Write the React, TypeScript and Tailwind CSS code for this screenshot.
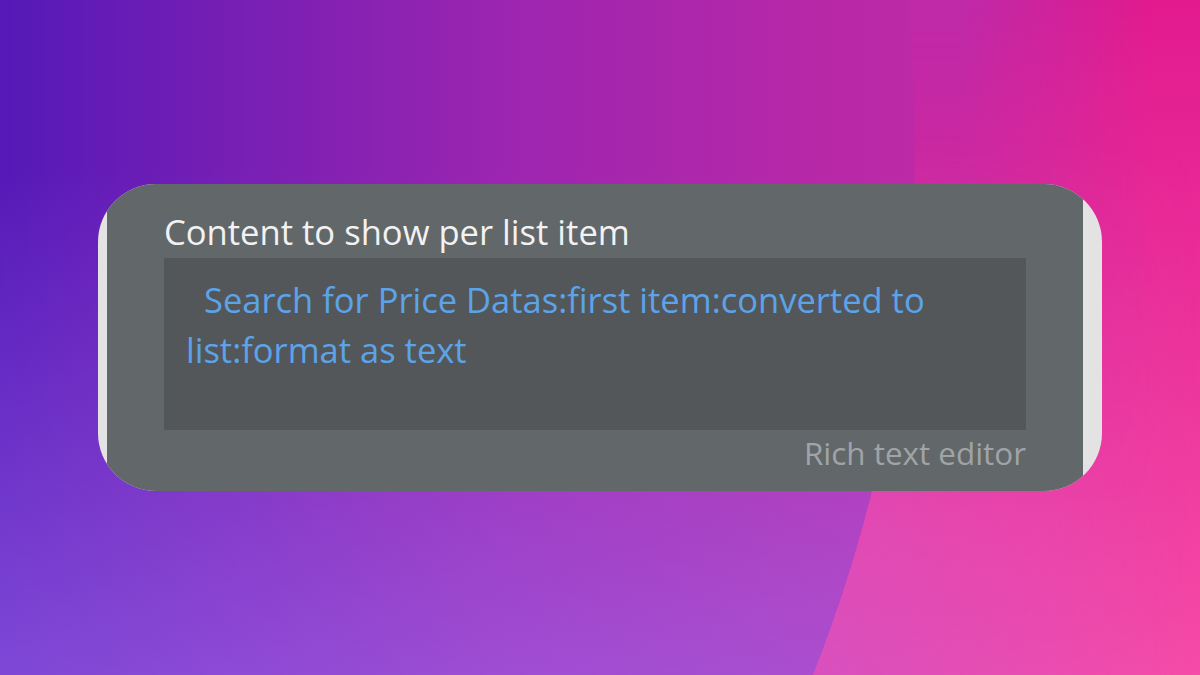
import React from 'react';

const font = { fontFamily: '"Open Sans", "Noto Sans", sans-serif' };

export default function App() {
  return (
    <div
      className="relative h-[675px] w-[1200px] overflow-hidden bg-[linear-gradient(to_bottom,#e21a8e,#f64ba8)]"
      style={font}
    >
      {/* magenta wash over the top of the right side */}
      <div className="absolute inset-0 bg-[linear-gradient(to_right,rgba(190,42,168,1)_0%,rgba(190,42,168,1)_80%,rgba(190,42,168,0)_96%)] [mask-image:linear-gradient(to_bottom,black_0%,transparent_75%)]" />
      {/* pinkish wash at the bottom */}
      <div className="absolute inset-0 bg-[linear-gradient(to_right,rgba(208,82,196,0.95)_62%,rgba(208,82,196,0)_100%)] [mask-image:linear-gradient(to_top,black_0%,transparent_80%)]" />
      {/* big darker blob from the left */}
      <div className="absolute inset-0 [clip-path:circle(1444px_at_-529px_141px)] bg-[linear-gradient(to_right,#5519b8,#9c25b0_42%,#b628a8_67%,#c02aa5_80%)]">
        <div className="h-full w-full bg-[linear-gradient(to_bottom,rgba(160,110,240,0)_25%,rgba(160,110,240,0.55)_100%)]" />
      </div>

      <div className="relative flex h-full items-center justify-center">
        <div className="flex h-[307px] w-[1004px] overflow-hidden rounded-[58px] bg-[#e3e3e3]">
          <div className="ml-[9px] mr-[19px] flex flex-1 flex-col bg-[#62676a] px-[57px] pt-[28px]">
            <div className="text-[34.6px] leading-[40px] text-[#f2f2f2]">
              Content to show per list item
            </div>
            <div className="mt-[6px] h-[172px] bg-[#53575a] pl-[22px] pr-4 pt-[17px] text-[34.5px] leading-[50px] text-[#5ca3e8]">
              <div className="indent-[18px]">Search for Price Datas:first item:converted to</div>
              <div>list:format as text</div>
            </div>
            <div className="mt-[3px] text-right text-[31.4px] leading-[40px] text-[#a0a4a6]">
              Rich text editor
            </div>
          </div>
        </div>
      </div>
    </div>
  );
}
